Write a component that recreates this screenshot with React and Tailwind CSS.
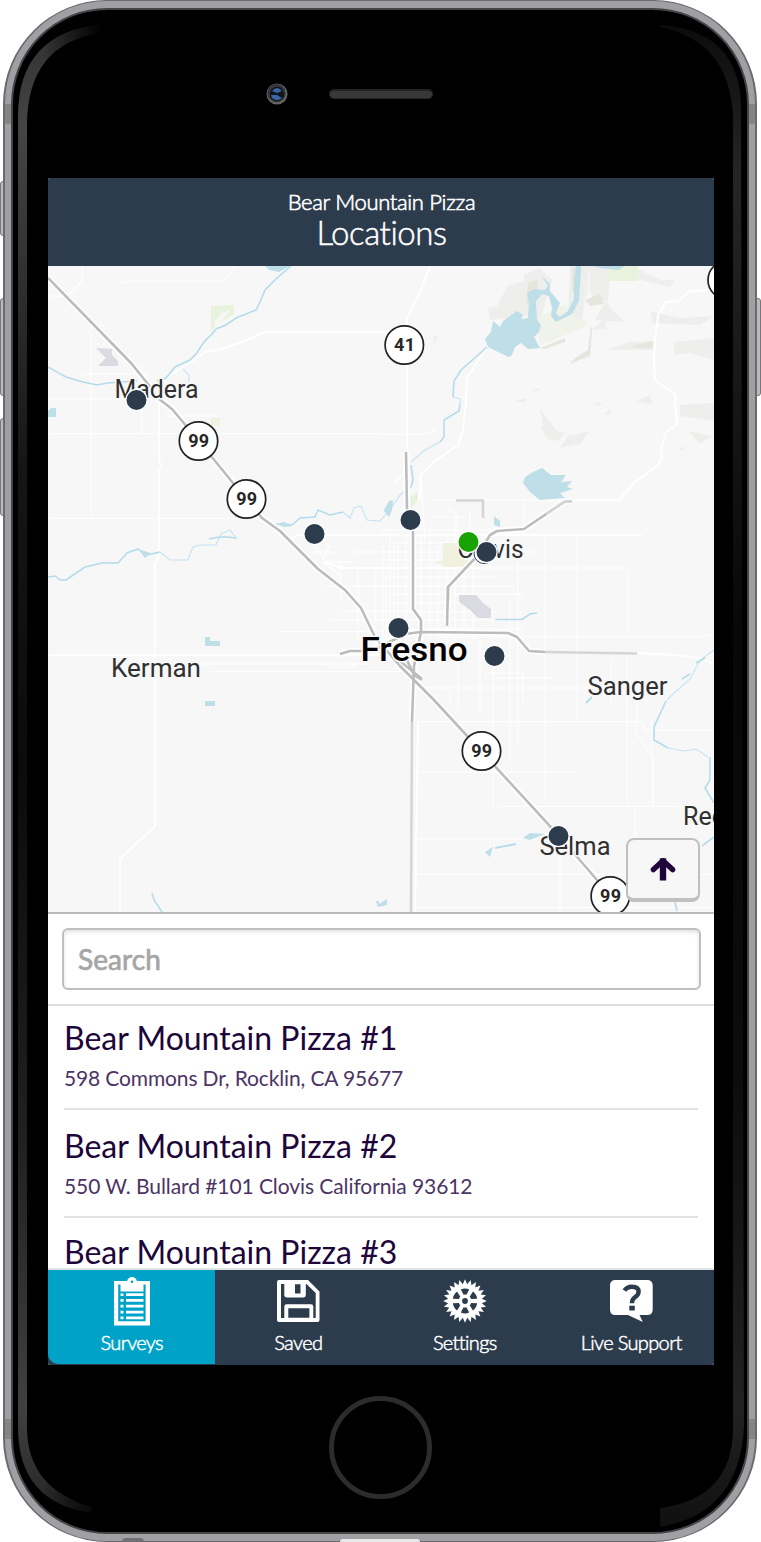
import React from "react";

const MINOR = [
  "M82 266 V281 L68 296 H49", "M121 283 L130 281 H220 L228 277 L235 266", "M91 325 V518", "M83 374 H150", "M49 399 H120", "M49 433.5 H380",
  "M142 367 V433", "M167 416 H220", "M49 518.5 H240", "M281 631.5 H380", "M200 664 H370", "M210 671.5 H420", "M325 662 L330 667 H352 L357 662",
  "M340 611 H420", "M332 620 H420", "M380 434 H424 L436 430", "M407 505 V470 L395 482", "M420 470 L425 540", "M432 500 H618", "M405 535.5 H643",
  "M455 552 H535", "M380 568 H628 V634", "M545 535 V800", "M577 535 V720", "M518 560 V745", "M493 660 V806", "M510 600 V763", "M627 655 V806",
  "M652 720 V806", "M420 721.5 H642 L645 730 H714", "M415 772 H577", "M500 806.5 H700", "M415 839 H545", "M415 874.5 H714", "M415 907.5 H714",
  "M560 845 V912", "M635 808 V845", "M415 688 L440 688 H600", "M485 673 H518", "M495 678 H552", "M638 690 L636 733 L653 757 V806",
  "M440 637 H700 L711 634", "M480 640 V712", "M458 660 V708", "M523 670 V704", "M611 660 V704", "M450 690 V706", "M315 546 L326 562 H355",
  "M310 552 H340", "M330 545 L323 559", "M354 552 H410", "M324 586 H410", "M358 570 V640", "M375 570 V650", "M386 575 V650", "M394 545 V650",
  "M340 560 L341 600", "M325 563 L341 577", "M448 508 L456 514 V538", "M470 510 V535", "M497 515 V535", "M430 517 H468", "M524 500 V535",
];

const GRID_H = [530, 543, 552, 560, 568, 577, 586, 594, 603, 612, 620, 629];
const GRID_V = [383, 390, 398, 406, 421, 430, 438, 447, 455, 464, 473];

const WHITE = [
  "M714 290 L690 291 L678 301 L666 302 L658 315 L657 325 L655 340 L654 355 L655 380 L675 394 L676 415 L677 424 L666 432 L661 450 L662 458 L658 465 L634 483 L619 500 H568",
  "M163 380 L185 366 L205 352 L222 349 L250 339 L264 332 H405", "M430 266 L420 292 L407 318 V452",
  "M159 398 V460 L161 466 L159 472 V555 L155 565 V826 L120 859 V912",
  "M49 655 H380", "M291 540 L297 535 H380", "M324 562 L342 568 H480", "M637 653 L675 655 L700 658 L714 664", "M380 535 H640", "M418 721 L415 912",
  "M488 346 L467 378 L466 400 L463 430 L458 445 L435 461 L421 475 L419 500",
];

const ROADS = [
  "M48 278 L131 363 L152 389 M159 399 L172 409 L198 440 L246 499 L262 518 L280 531 L318 569 L345 590 L361 608 L375 637 L400 666 L434 700 L481 751 L559 836 L610 895",
  "M406 452 L407 510 M413 528 V609 L421 620 V632 L414 666 L412 722", "M448 587 L447 626",
  "M572 501 L564 502 L524 529 L497 531 L490 535 L478 555 L448 587 V600", "M340 654 L350 651 H372 L405 634 L421 632 L508 633 L517 637 L529 651 L545 652",
  "M400 661 L422 679", "M407 660 L414 675 L422 680",
];

const RIVERS = [
  "M291 266 L277 278 L265 290 L260 302 L256 310 L236 318 L226 325 L216 329 L211 335 L204 342 L196 354 L190 360 L175 367 L166 378 L157 381 M137 381 L108 383 L97 385 L83 382 L66 377 L48 367",
  "M48 577 L55 576 L60 580 L66 580 L85 567 L102 563 H118 L127 553 L138 549 L147 555 L160 552",
  "M237 538 L227 537 L219 537 L209 539 M276 524 L284 524 L292 525 L300 518 L315 517 L318 510 L330 515 L343 512",
  "M487 347 L478 355 L461 370 L454 381 L453 397 M460 404 L459 411 L444 420 V437 L440 442 M411 465 L413 480 L411 487",
  "M666 701 L660 714 L654 727 V740 L668 748 M710 757 V780 L705 788 L714 803 M714 837 L702 846",
  "M495 619.5 H522 L530 614 L537 613", "M152 893 L154 900 L162 912",
];
const THIN_RIVERS = [
  "M160 552 L170 560 H188 L193 547 L200 545 H216 L221 534 L230 530 L236 538", "M343 512 L350 518 L354 508 L361 506 L367 520 L380 521",
  "M453 397 L460 399 V405 M440 442 L425 450 L411 462 M411 487 L400 495 L390 510 L379 522", "M183 369 L189 375 V382",
  "M714 650 L700 660 L690 679 L672 695 L667 700 M668 748 L684 751 L696 749 L708 757", "M49 367 L62 375",
];

const SHADE = [
  "M524 275 L540 268 L552 280 L540 320 L524 315 Z", "M570 266 H590 L582 320 L568 315 Z", "M590 266 H620 L640 270 L660 280 H675 L670 287 L610 272 L608 300 L595 305 L590 290 Z",
  "M508 285 L530 280 L525 300 L495 310 Z", "M488 308 L525 300 V316 L490 320 Z", "M605 318 L592 330 L588 350 L570 362 L590 357 L592 330 L607 329 Z",
  "M606 300 L595 320 L625 322 L612 310 Z", "M650 311 L680 318 L714 316 L700 325 L653 323 Z", "M606 350 L630 342 L653 341 L654 350 Z",
  "M673 342 L714 338 V360 L690 353 L675 355 Z", "M540 409 L558 432 L545 436 Z", "M540 426 L565 433 L558 441 L548 439 Z",
  "M568 436 L590 431 L580 444 L560 448 L562 445 Z", "M680 405 L714 403 V421 L680 416 Z", "M515 402 L524 398 L527 402 Z", "M531 391 L537 388 L541 390 Z",
  "M593 402 L603 404 L598 406 Z", "M604 415 L610 409 L612 413 Z", "M637 401 L650 395 L652 404 Z", "M688 431 L712 436 L700 444 Z", "M677 448 L684 447 L684 451 Z",
  "M433 335 L438 337 L434 344 Z",
];

function Shield({ x, y, n }) {
  return (
    <g>
      <circle cx={x} cy={y} r="19.2" fill="#fff" stroke="#222" strokeWidth="1.7" />
      <text x={x - 10.3} y={y + 6.2} textLength="21" fontSize="18" fontWeight="700" fill="#262626">{n}</text>
    </g>
  );
}

function Place({ x, y, w, size = 25, weight = 400, fill = "#303030", children }) {
  return (
    <text x={x} y={y} textLength={w} lengthAdjust="spacingAndGlyphs" fontSize={size} fontWeight={weight} fill={fill} stroke="#f8f8f8" strokeWidth="3" strokeLinejoin="round" paintOrder="stroke">
      {children}
    </text>
  );
}

function Pin({ x, y, fill = "#2c3c4c" }) {
  return <circle cx={x} cy={y} r="10.6" fill={fill} stroke="#fff" strokeWidth="1.2" />;
}

function LocationMap() {
  return (
    <svg viewBox="48 266 666 646" className="block h-full w-full" fontFamily="Roboto, sans-serif">
      <rect x="48" y="266" width="666" height="646" fill="#f7f7f7" />
      <g fill="#eeeeec">{SHADE.map((d) => <path key={d} d={d} />)}</g>
      <g fill="#e6e6df">
        <path d="M591 325 L588 350 L575 358 L570 364 L590 355 L592 330 Z" />
        <path d="M632 346 L653 341 V348 H635 Z" />
        <path d="M585 300 L600 294 L604 304 L590 306 Z" />
        <path d="M540 348 L565 338 V342 L545 349 Z" />
        <path d="M528 282 L538 280 V296 L526 306 Z" />
        <path d="M572 268 H582 L579 292 H572 Z" />
      </g>
      <path d="M608 266 H638 V281 H608 Z M211 306 L234 305 V314 L218 324 L211 331 Z M410 496 L418 493 V500 L411 507 Z" fill="#e8f3dd" />
      <path d="M565 305 L575 318 L588 320 L585 327 L540 345 L536 318 Z M582 278 L590 285 L586 300 Z" fill="#f0f3ea" />
      <g fill="none" stroke="#fff" strokeWidth="1.1">
        {GRID_H.map((y) => <path key={y} d={`M${380 + (y % 5) * 3} ${y} H${470 + (y % 7) * 9}`} />)}
        {GRID_V.map((x) => <path key={x} d={`M${x} ${530 + (x % 5) * 5} V${630 + (x % 4) * 9}`} />)}
        {MINOR.map((d) => <path key={d} d={d} />)}
      </g>
      <path d="M443 543 H468 V567 H443 Z M211 418 H220 V426 H211 Z M436 561 H444 V564 H436 Z" fill="#f1f1e0" />
      <path d="M216 327 L214 322 L222 313 L231 309 L224 318 Z" fill="#f7f7f7" />
      <path d="M96 348 L112 349 V355 L118 361 V366 H98 L106 358 Z M459 595 H476 L483 603 L491 609 V618 H478 L470 610 L459 602 Z" fill="#dadae3" />
      <g fill="none" stroke="#fff" strokeWidth="2">{WHITE.map((d) => <path key={d} d={d} />)}</g>
      <g fill="none" stroke="#b4dcea" strokeWidth="1.6">{RIVERS.map((d) => <path key={d} d={d} />)}</g>
      <g fill="none" stroke="#c5e4f3" strokeWidth="1.1">{THIN_RIVERS.map((d) => <path key={d} d={d} />)}</g>
      <g fill="#bedee8">
        <path d="M485 339 L491 332 L493 321 L500 327 L503 321 L517 311 L523 315 L521 319 L528 318 L529 302 L527 293 L534 289 L545 290 L548 286 L541 275 L550 284 V291 L560 303 L556 313 L560 317 L568 311 L574 299 V280 L576 266 H581 L579 301 L572 314 L556 322 L551 316 L552 308 L549 296 L542 294 L536 301 L537 320 L541 325 L539 332 L534 337 L540 348 L528 349 L521 343 L515 347 L512 355 L509 357 L496 351 L488 347 Z" />
        <path d="M523 483 L525 477 L533 472 L542 468 L551 475 L566 475 L561 482 L572 481 L567 487 L573 489 L560 493 L565 498 L540 500 L530 492 Z" />
        <path d="M494 516 L500 521 V527 L494 525 Z M205 637 H210 V641 H220 V646 H205 Z M205 701 H215 V706 H205 Z M48 411 L51 408 H56 V417 H48 Z M384 510 L389 501 L393 500 L392 510 L389 517 L384 511 Z" />
        <path d="M265 266 H290 L279 272 L269 270 Z M593 266 H625 L618 270 L600 268 Z M523 838 L530 833 L545 834 L530 840 Z M485 852 L493 847 L490 857 Z M376 901 H379 V904 L387 899 V905 L378 907 Z M276 524 L284 522 L292 526 L284 527 Z M138 549 L151 553 L145 558 Z" />
      </g>
      <path d="M495 848 L516 844 M682 679 L690 674 M586 703 L592 697 M675 902 L677 911 M696 663 L705 658" fill="none" stroke="#b4dcea" strokeWidth="1.8" />
      <g fill="none" stroke="#fff" strokeWidth="6" strokeLinejoin="round">{ROADS.map((d) => <path key={d} d={d} />)}</g>
      <path d="M456 500.5 H483 V518 M545 652 L637 653.5 M412 722 L411 912" fill="none" stroke="#d5d5d5" strokeWidth="2.6" />
      <g fill="none" stroke="#bcbcbc" strokeWidth="2.6" strokeLinejoin="round">{ROADS.map((d) => <path key={d} d={d} />)}</g>
      <path d="M572 501 L564 502 L546 514" fill="none" stroke="#d5d5d5" strokeWidth="2.6" />

      <Shield x={404.3} y={345} n="41" />
      <Shield x={198.5} y={441} n="99" />
      <Shield x={246.5} y={499} n="99" />
      <Shield x={481.5} y={751} n="99" />
      <Shield x={610.3} y={896} n="99" />
      <circle cx="727" cy="280" r="19" fill="#fff" stroke="#222" strokeWidth="1.7" />

      <Place x={114.5} y={397.5} w={84}>Madera</Place>
      <Place x={457.5} y={558} w={66}>Clovis</Place>
      <Place x={111} y={677} w={90}>Kerman</Place>
      <Place x={360.5} y={661} w={107} size={34} weight={500} fill="#000">Fresno</Place>
      <Place x={587.5} y={695} w={80}>Sanger</Place>
      <Place x={683} y={825} w={87}>Reedley</Place>
      <Place x={539.5} y={855} w={71}>Selma</Place>

      <Pin x={136.5} y={400} />
      <Pin x={314.5} y={534} />
      <Pin x={410.5} y={520} />
      <circle cx="484" cy="553.5" r="10" fill="#fff" stroke="#2c3c4c" strokeWidth="1" />
      <Pin x={486.5} y={552} />
      <Pin x={468.5} y={542} fill="#18a303" />
      <Pin x={398.5} y={628} />
      <Pin x={494.5} y={656} />
      <Pin x={558.5} y={836} />
    </svg>
  );
}

function SurveyIcon() {
  return (
    <svg viewBox="0 0 36 49" className="h-[49px] w-9" fill="#fff">
      <path fillRule="evenodd" d="M0 4 H36 V48.5 H0 Z M4.2 7.5 V44.2 H31.6 V7.5 Z" />
      <path d="M13 5 A5 5 0 0 1 23 5 L29.5 7 V14.5 H6.5 V7 Z" />
      <circle cx="18" cy="4.7" r="1.3" fill="#00a3c7" />
      <path d="M6.5 16.5 H9.5 V19 H6.5 Z M12 16.2 H29.5 V19 H12 Z M6.5 22 H9.5 V24.8 H6.5 Z M12 22 H29.5 V24.8 H12 Z M6.5 27.8 H9.5 V30.6 H6.5 Z M12 27.8 H29.5 V30.6 H12 Z M6.5 33.8 H9.5 V36.4 H6.5 Z M12 33.8 H29.5 V36.4 H12 Z M6.5 39.6 H9.5 V42.2 H6.5 Z M12 39.6 H29.5 V42.2 H12 Z" />
    </svg>
  );
}

function SaveIcon() {
  return (
    <svg viewBox="0 0 43 42" className="h-[42px] w-[43px]" fill="#fff">
      <path fillRule="evenodd" d="M2 0 H31 L42.5 11.5 V40 Q42.5 42 40.5 42 H2 Q0 42 0 40 V2 Q0 0 2 0 Z M4 4 V38 H7.3 V26.5 Q7.3 24.2 9.6 24.2 H34 Q36.3 24.2 36.3 26.5 V38 H38.7 V13 L29.5 4 H28.8 V14.8 Q28.8 17.5 26 17.5 H10 Q7.3 17.5 7.3 14.8 V4 Z M18 4.3 V13.5 H23.5 V4.3 Z M11.3 28.2 V37.8 H32.4 V28.2 Z" />
    </svg>
  );
}

const TEETH = Array.from({ length: 48 }, (_, i) => {
  const r = i % 2 ? 17 : 21.8;
  const a = ((i * 7.5 - 90) * Math.PI) / 180;
  return `${(22 + r * Math.cos(a)).toFixed(2)},${(22 + r * Math.sin(a)).toFixed(2)}`;
}).join(" ");

function GearIcon() {
  return (
    <svg viewBox="0 0 44 44" className="h-11 w-11">
      <polygon points={TEETH} fill="#fff" />
      <g fill="#2c3c4c">
        {[0, 60, 120, 180, 240, 300].map((a) => (
          <path key={a} transform={`rotate(${a} 22 22)`} d="M17.8 10.4 Q22 8.6 26.2 10.4 L23.4 15.8 Q22 15.2 20.6 15.8 Z" />
        ))}
        <circle cx="22" cy="22" r="2.9" />
      </g>
    </svg>
  );
}

function SupportIcon() {
  return (
    <svg viewBox="0 0 43 42" className="h-[42px] w-[43px]">
      <path d="M5.5 0 H37 Q42.7 0 42.7 5.5 V29.5 Q42.7 35 37 35 H29.5 L32.8 42 L18 35 H5.5 Q0 35 0 29.5 V5.5 Q0 0 5.5 0 Z" fill="#fff" />
      <path d="M14.4 10.6 Q17 6.8 22 6.8 Q28.6 6.8 28.6 11.8 Q28.6 15 24.8 17.4 Q22 19.2 22 23.2" fill="none" stroke="#2c3c4c" strokeWidth="4.4" />
      <path d="M19.3 25.8 H24.8 V30.6 H19.3 Z" fill="#2c3c4c" />
    </svg>
  );
}

const LOCATIONS = [
  { name: "Bear Mountain Pizza #1", address: "598 Commons Dr, Rocklin, CA 95677", row: "h-[104px] pt-3", track: "tracking-[-0.14px]" },
  { name: "Bear Mountain Pizza #2", address: "550 W. Bullard #101 Clovis California 93612", row: "h-[108px] pt-4", track: "tracking-[-0.08px]" },
  { name: "Bear Mountain Pizza #3", address: "", row: "h-[108px] pt-[14px]", track: "" },
];

const TABS = [
  { label: "Surveys", Icon: SurveyIcon, box: "bg-[#00a3c7] rounded-bl-[10px]", pad: "pt-[7px]" },
  { label: "Saved", Icon: SaveIcon, box: "", pad: "pt-[10px]" },
  { label: "Settings", Icon: GearIcon, box: "", pad: "pt-[9px]" },
  { label: "Live Support", Icon: SupportIcon, box: "", pad: "pt-[10px]" },
];

function Screen() {
  return (
    <div className="flex h-[1187px] w-[666px] flex-col overflow-hidden rounded-[2px] bg-white [font-variant-ligatures:none]">
      <header className="flex h-[88px] shrink-0 flex-col items-center bg-[#2c3c4c] pt-3 pl-px text-white">
        <div className="text-[22px] leading-6 font-light tracking-[-0.33px] [-webkit-text-stroke:0.6px_#fff]">Bear Mountain Pizza</div>
        <h1 className="-mt-px text-[33px] leading-[38px] font-light tracking-[-0.45px] [-webkit-text-stroke:0.5px_#fff]">Locations</h1>
      </header>
      <div className="relative h-[646px] w-[666px] shrink-0 overflow-hidden">
        <LocationMap />
        <button className="absolute right-[14px] bottom-[10px] flex h-[64px] w-[74px] items-center justify-center rounded-lg border-2 border-b-4 border-[#c0c0c0] bg-[#f7f7f7]">
          <svg viewBox="0 0 26 24" className="h-6 w-[26px]" fill="none" stroke="#20053a">
            <path d="M13 4.5 V20.3" strokeWidth="6.4" strokeLinecap="square" strokeLinejoin="round" />
            <path d="M3.4 12.6 L13 3.8 L22.6 12.6" strokeWidth="5.4" strokeLinecap="round" strokeLinejoin="round" />
          </svg>
        </button>
      </div>
      <div className="h-[94px] shrink-0 border-t-2 border-b-2 border-t-[#bbb] border-b-[#ddd] px-[14px] pt-[14px]">
        <div className="flex h-[62px] w-[639px] items-center rounded-md border-2 border-[#bfbfbf] pl-[14px] text-[28px] tracking-[0.1px] text-[#a6a6a6] shadow-[inset_0_2px_4px_rgba(0,0,0,0.12)]">
          <span className="[-webkit-text-stroke:0.7px_#a6a6a6]">Search</span>
        </div>
      </div>
      <ul className="h-[262px] shrink-0 overflow-hidden pl-4">
        {LOCATIONS.map((l) => (
          <li key={l.name} className={`w-[634px] border-b-2 border-[#e2e2e2] ${l.row}`}>
            <div className="text-[32px] leading-10 text-[#20053a]">{l.name}</div>
            <div className={`text-[21px] leading-10 text-[#4c3465] ${l.track}`}>{l.address}</div>
          </li>
        ))}
      </ul>
      <nav className="grid h-[97px] shrink-0 grid-cols-4 border-t-2 border-[#dfe3e6] bg-[#2c3c4c]">
        {TABS.map(({ label, Icon, box, pad }) => (
          <div key={label} className={`h-[94px] pl-px ${box}`}>
            <div className={`flex h-[58px] justify-center ${pad}`}><Icon /></div>
            <div className="text-center text-[20px] leading-7 font-light tracking-[-0.65px] text-white [-webkit-text-stroke:0.5px_#fff]">{label}</div>
          </div>
        ))}
      </nav>
    </div>
  );
}

export default function App() {
  return (
    <div className="relative h-[1542px] w-[761px] overflow-hidden bg-white pl-[3px] font-['Lato',sans-serif]">
      <div className="absolute top-[181px] left-0 h-[55px] w-2 rounded-l-[3px] border border-[#777] bg-[#b9bcbf]" />
      <div className="absolute top-[298px] left-0 h-[98px] w-2 rounded-l-[3px] border border-[#777] bg-[#b9bcbf]" />
      <div className="absolute top-[418px] left-0 h-[98px] w-2 rounded-l-[3px] border border-[#777] bg-[#b9bcbf]" />
      <div className="absolute top-[298px] right-0 h-[98px] w-2 rounded-r-[3px] border border-[#777] bg-[#b9bcbf]" />
      <div className="relative h-[1542px] w-[754px] overflow-hidden rounded-[104px] border-x-2 border-t border-b border-[#6b6b6e] bg-[#a09fa4] px-[6px] pt-[7px] pb-[7px]">
        <div className="absolute top-[103px] left-0 h-5 w-full bg-[#858585]" />
        <div className="absolute top-[1418px] left-0 h-5 w-full bg-[#858585]" />
        <div className="relative flex h-full w-full flex-col items-center overflow-hidden rounded-[96px] border-2 border-[#454548] bg-black">
          <svg viewBox="13 10 735 1522" className="absolute inset-0 h-full w-full">
            <defs>
              <linearGradient id="left" x1="0" y1="0" x2="0" y2="1">
                <stop offset="0" stopColor="#303030" /><stop offset="0.07" stopColor="#454545" /><stop offset="0.3" stopColor="#151515" />
                <stop offset="0.5" stopColor="#0b0b0b" /><stop offset="0.75" stopColor="#202020" /><stop offset="0.93" stopColor="#404040" /><stop offset="1" stopColor="#252525" />
              </linearGradient>
              <linearGradient id="right" x1="0" y1="0" x2="0" y2="1">
                <stop offset="0" stopColor="#0c0c0c" /><stop offset="0.1" stopColor="#252525" /><stop offset="0.4" stopColor="#080808" />
                <stop offset="0.7" stopColor="#0c0c0c" /><stop offset="0.92" stopColor="#222" /><stop offset="1" stopColor="#101010" />
              </linearGradient>
              <linearGradient id="fade" x1="18" y1="0" x2="102" y2="0" gradientUnits="userSpaceOnUse">
                <stop offset="0.3" stopColor="#000" stopOpacity="0" /><stop offset="1" stopColor="#000" />
              </linearGradient>
            </defs>
            <path d="M102 23 Q18 32 18 115 V1428 Q18 1504 92 1514 L92 1508 Q27 1490 27 1428 V125 Q27 42 102 32 Z" fill="url(#left)" />
            <rect x="15" y="20" width="92" height="100" fill="url(#fade)" />
            <rect x="15" y="1425" width="92" height="95" fill="url(#fade)" />
            <path d="M661 24 Q743 30 742 110 L745 1428 Q740 1515 661 1528 V1509 Q734 1500 734 1428 V115 Q730 40 661 26 Z" fill="url(#right)" />
          </svg>
          <div className="relative flex h-[168px] w-full shrink-0 justify-center">
            <div className="mt-[79px] ml-[2px] flex h-[10px] w-[104px] rounded-full border border-t-2 border-[#242424] bg-[#383838]" />
            <svg viewBox="0 0 24 24" className="absolute top-[72px] left-[252px] size-6">
              <circle cx="12" cy="12" r="10.5" fill="#666" />
              <circle cx="11.5" cy="11" r="9.2" fill="#35353a" />
              <circle cx="12" cy="12" r="7.2" fill="#10161f" />
              <path d="M7 9 Q12 3 17 9 L12 11 Z M6 13 L12 13 L17 16 Q12 20 7 16 Z" fill="#3967a5" />
            </svg>
          </div>
          <div className="relative ml-[2px]"><Screen /></div>
          <div className="relative mt-[31px] size-[103px] shrink-0 rounded-full border-[5px] border-[#2c2c2c]" />
        </div>
      </div>
      <div className="absolute bottom-0 left-[122px] h-1 w-[22px] rounded-t-full bg-[#707073]" />
      <div className="absolute bottom-0 left-[340px] h-[3px] w-[80px] rounded-t-full bg-[#e8e8e8]" />
    </div>
  );
}
